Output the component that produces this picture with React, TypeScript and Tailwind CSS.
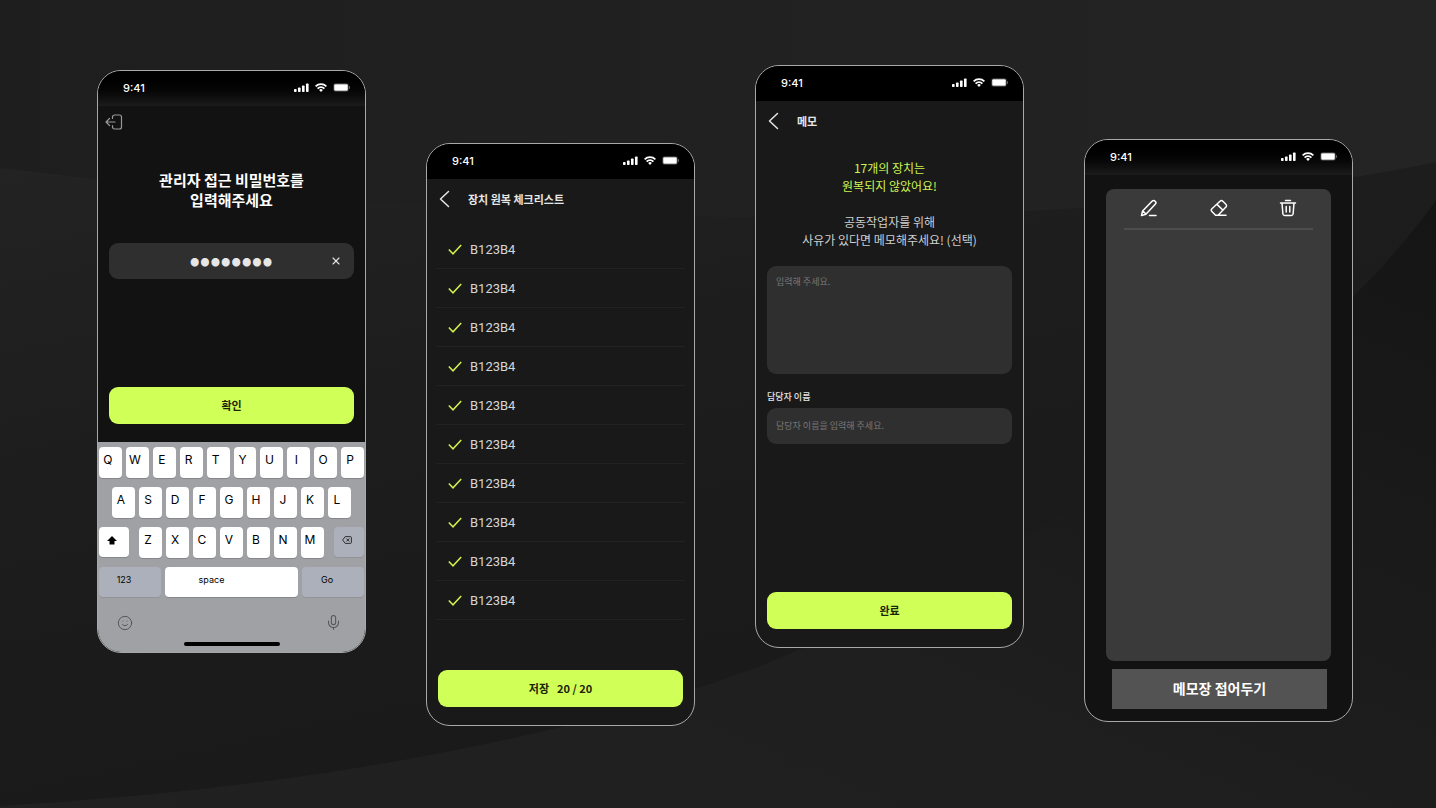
import { Mic, Smile, X } from "lucide-react";
import type { ReactNode } from "react";

const latin = "font-['Inter','Noto_Sans_CJK_KR',sans-serif]";

const StatusBar = ({ className }: { className: string }) => (
  <div className={`flex h-[35px] shrink-0 items-center justify-between pr-[14px] pb-[2px] pl-[25px] text-white ${className}`}>
    <span className={`text-[11px] leading-4 font-medium ${latin}`}>9:41</span>
    <div className="flex items-center gap-[6px]">
      <svg className="h-[9px] w-[15px]" viewBox="0 0 15 9" fill="currentColor">
        <rect x="0" y="6" width="2.6" height="3" rx=".7" />
        <rect x="4" y="4.5" width="2.6" height="4.5" rx=".7" />
        <rect x="8" y="2.5" width="2.6" height="6.5" rx=".7" />
        <rect x="12" y="0.5" width="2.6" height="8.5" rx=".7" />
      </svg>
      <svg className="h-[9px] w-[12px]" viewBox="0 0 12 9" fill="none" stroke="currentColor" strokeWidth="1.8">
        <path d="M.6 3.3a7.7 7.7 0 0 1 10.8 0M2.6 5.6a4.8 4.8 0 0 1 6.8 0" />
        <path d="M6 9 4.1 7.1a2.6 2.6 0 0 1 3.8 0Z" fill="currentColor" stroke="none" />
      </svg>
      <svg className="h-[9px] w-[18px]" viewBox="0 0 18 9">
        <rect x=".5" y=".5" width="15" height="8" rx="2" fill="none" stroke="#333" />
        <rect x="1.2" y="1.2" width="13.6" height="6.6" rx="1" fill="currentColor" />
        <path d="M16.5 3.2v2.6" stroke="#666" />
      </svg>
    </div>
  </div>
);

type PhoneProps = {
  className: string;
  barClass?: string;
  children: ReactNode;
};

const Phone = ({ className, barClass = "bg-black", children }: PhoneProps) => (
  <section
    className={`flex h-[583px] min-w-0 flex-col overflow-hidden rounded-[24px] border border-[#a8a8a8] text-[#e6e6e6] ${className}`}
  >
    <StatusBar className={barClass} />
    {children}
  </section>
);

const PrimaryButton = ({ children }: { children: ReactNode }) => (
  <button
    type="button"
    className="mx-[11px] flex h-[37px] shrink-0 items-center justify-center gap-2 rounded-[9px] bg-[#d0ff57] pb-px text-[11px] font-bold text-[#1c2408]"
  >
    {children}
  </button>
);

const ScreenHeader = ({ title }: { title: string }) => (
  <header className="flex h-10 shrink-0 items-center gap-[18px] pl-[12px]">
    <button type="button" aria-label="뒤로">
      <svg className="h-[18px] w-[11px]" viewBox="0 0 11 18" fill="none" stroke="currentColor" strokeWidth="1.5">
        <path d="M9.5 1.5 1.5 9l8 7.5" strokeLinecap="round" strokeLinejoin="round" />
      </svg>
    </button>
    <h2 className="text-[11px] leading-4 font-bold">{title}</h2>
  </header>
);

const ExitIcon = () => (
  <svg
    className="h-4 w-[18px]"
    viewBox="0 0 18 16"
    fill="none"
    stroke="currentColor"
    strokeWidth="1.2"
    strokeLinecap="round"
    strokeLinejoin="round"
  >
    <path d="M10 8H1M4.5 4.5 1 8l3.5 3.5" />
    <path d="M7.5 4.5V3a2 2 0 0 1 2-2h5a2 2 0 0 1 2 2v10a2 2 0 0 1-2 2h-5a2 2 0 0 1-2-2v-1.5" />
  </svg>
);

const ToolIcon = ({ children }: { children: ReactNode }) => (
  <svg
    className="size-[18px]"
    viewBox="0 0 18 18"
    fill="none"
    stroke="currentColor"
    strokeWidth="1.5"
    strokeLinecap="round"
    strokeLinejoin="round"
  >
    {children}
  </svg>
);

const Key = ({ label }: { label: string }) => (
  <button
    type="button"
    className="h-[31px] min-w-0 flex-1 rounded-[4px] bg-white pr-[5px] pb-[5px] text-[12px] shadow-[0_1px_0_#85878a]"
  >
    {label}
  </button>
);

const Keyboard = () => (
  <div className={`flex flex-1 flex-col bg-[#a0a1a4] pt-[5px] text-black ${latin}`}>
    <div className="flex flex-col gap-[9px] px-[1px]">
      <div className="flex gap-1">
        {"QWERTYUIOP".split("").map((k) => (
          <Key key={k} label={k} />
        ))}
      </div>
      <div className="flex gap-1 px-[13px]">
        {"ASDFGHJKL".split("").map((k) => (
          <Key key={k} label={k} />
        ))}
      </div>
      <div className="flex gap-[10px]">
        <button
          type="button"
          aria-label="shift"
          className="flex h-[30px] w-[30px] items-center justify-center rounded-[4px] bg-white pr-1 pb-1 shadow-[0_1px_0_#85878a]"
        >
          <svg className="h-[9px] w-[10px]" viewBox="0 0 10 9">
            <path d="M5 0 10 5H7.5v3.5h-5V5H0Z" />
          </svg>
        </button>
        <div className="flex min-w-0 flex-1 gap-1">
          {"ZXCVBNM".split("").map((k) => (
            <Key key={k} label={k} />
          ))}
        </div>
        <button
          type="button"
          aria-label="delete"
          className="flex h-[30px] w-[30px] items-center justify-center rounded-[4px] bg-[#abb0bb] pr-1 pb-1 shadow-[0_1px_0_#909398]"
        >
          <svg className="h-[8px] w-[10px]" viewBox="0 0 10 8" fill="none" stroke="#222" strokeWidth=".9">
            <path d="M3.2.6h5.2a1 1 0 0 1 1 1v4.8a1 1 0 0 1-1 1H3.2L.6 4ZM4.4 2.5l3 3M7.4 2.5l-3 3" />
          </svg>
        </button>
      </div>
      <div className="flex gap-1 text-[9px]">
        <button type="button" className="h-[30px] w-[62px] rounded-[4px] bg-[#abb0bb] pr-[12px] pb-[4px] shadow-[0_1px_0_#909398]">
          123
        </button>
        <button type="button" className="h-[30px] flex-1 rounded-[4px] bg-white pr-[40px] pb-[4px] shadow-[0_1px_0_#85878a]">
          space
        </button>
        <button type="button" className="h-[30px] w-[62px] rounded-[4px] bg-[#abb0bb] pr-[12px] pb-[4px] shadow-[0_1px_0_#909398]">
          Go
        </button>
      </div>
    </div>
    <div className="mt-[17px] flex items-center justify-between px-[19px] text-[#55575a]">
      <Smile size={16} strokeWidth={1.5} />
      <Mic size={17} strokeWidth={1.5} className="mr-1" />
    </div>
    <div className="mx-auto mt-auto mb-[6px] h-1 w-24 rounded-full bg-black" />
  </div>
);

const PasswordScreen = () => (
  <Phone className="mt-[70px] bg-[#121212]" barClass="bg-linear-to-b from-black to-[#1b1b1b]">
    <button type="button" aria-label="나가기" className="mt-2 ml-[7px] w-fit text-[#999]">
      <ExitIcon />
    </button>
    <h1 className="mt-10 text-center text-[15px] leading-5 font-bold text-white">
      관리자 접근 비밀번호를
      <br />
      입력해주세요
    </h1>
    <div className="mx-[11px] mt-[33px] flex h-9 items-center rounded-[9px] bg-[#2f2f2f] pr-[12px] pl-[23px]">
      <input
        type="password"
        aria-label="비밀번호"
        defaultValue="12345678"
        className="h-9 min-w-0 flex-1 bg-transparent pb-[6px] text-center text-[26px] font-black outline-none"
      />
      <button type="button" aria-label="지우기">
        <X size={12} strokeWidth={2.2} />
      </button>
    </div>
    <div className="mt-[108px] mb-[18px] flex flex-col">
      <PrimaryButton>확인</PrimaryButton>
    </div>
    <Keyboard />
  </Phone>
);

const devices = Array.from({ length: 10 }, () => "B123B4");

const ChecklistScreen = () => (
  <Phone className="mt-[143px] bg-[#191919]">
    <ScreenHeader title="장치 원복 체크리스트" />
    <ul className="mx-[9px] mt-[11px]">
      {devices.map((name, i) => (
        <li key={i} className="flex h-[39px] items-center gap-2 border-b border-[#222] pt-px pl-[12px]">
          <svg className="h-[11px] w-[14px]" viewBox="0 0 14 11" fill="none" stroke="#d0f04f" strokeWidth="1.5">
            <path d="m.8 5.5 4.2 4.3L13.2 1" />
          </svg>
          <span className="font-['Roboto',sans-serif] text-[13px] leading-4 text-[#d6d6d6]">{name}</span>
        </li>
      ))}
    </ul>
    <div className="mt-auto mb-[18px] flex flex-col">
      <PrimaryButton>
        <span>저장</span>
        <span>20 / 20</span>
      </PrimaryButton>
    </div>
  </Phone>
);

const MemoScreen = () => (
  <Phone className="mt-[65px] bg-[#191919]">
    <ScreenHeader title="메모" />
    <p className="mt-[18px] text-center text-[12px] leading-[18px] text-[#cdf452]">
      17개의 장치는
      <br />
      원복되지 않았어요!
    </p>
    <p className="mt-[18px] text-center text-[12px] leading-[18px] text-[#cfcfcf]">
      공동작업자를 위해
      <br />
      사유가 있다면 메모해주세요! (선택)
    </p>
    <textarea
      aria-label="메모"
      placeholder="입력해 주세요."
      className="mx-[11px] mt-[17px] h-[108px] shrink-0 resize-none rounded-[9px] bg-[#2f2f2f] px-[9px] py-2 text-[9px] leading-4 outline-none placeholder:text-[#777]"
    />
    <label htmlFor="manager" className="mx-[11px] mt-[15px] text-[9px] leading-4 font-medium">
      담당자 이름
    </label>
    <input
      id="manager"
      placeholder="담당자 이름을 입력해 주세요."
      className="mx-[11px] mt-[3px] h-9 shrink-0 rounded-[9px] bg-[#2f2f2f] px-[9px] pb-[2px] text-[9px] outline-none placeholder:text-[#777]"
    />
    <div className="mt-auto mb-[18px] flex flex-col">
      <PrimaryButton>완료</PrimaryButton>
    </div>
  </Phone>
);

const NotepadScreen = () => (
  <Phone className="mt-[139px] bg-[#121212]" barClass="bg-linear-to-b from-black to-[#1b1b1b]">
    <div className="mx-[21px] mt-[14px] h-[472px] rounded-[8px] bg-[#3a3a3a] px-[18px] pt-[10px]">
      <div className="flex justify-between border-b-2 border-[#4d4d4d] px-4 pb-[11px] text-white">
        <button type="button" aria-label="펜">
          <ToolIcon>
            <path d="M1.5 16.5 2.6 11.9 12 2.2a2.2 2.2 0 0 1 3.2 0 2.2 2.2 0 0 1 0 3.1L5.9 15.2ZM2.9 11.9l3 3.1M9.5 16.5h6.5" />
          </ToolIcon>
        </button>
        <button type="button" aria-label="지우개">
          <ToolIcon>
            <path d="M10 2.2a2 2 0 0 1 2.9 0l3 3a2 2 0 0 1 0 2.9l-7.8 8.2H5.6l-3.7-3.8a2 2 0 0 1 0-2.8ZM7 5.4l6 5.9M8 16.3h8" />
          </ToolIcon>
        </button>
        <button type="button" aria-label="삭제">
          <ToolIcon>
            <path d="M1.5 4h15M6.5 1.5h5M3 4l.9 11a1.8 1.8 0 0 0 1.8 1.5h6.6a1.8 1.8 0 0 0 1.8-1.5L15 4M7.2 7.5v5.5M10.8 7.5v5.5" />
          </ToolIcon>
        </button>
      </div>
    </div>
    <button type="button" className="mt-2 mr-[25px] ml-[27px] h-10 bg-[#535353] pb-[2px] text-[14px] font-bold text-white">
      메모장 접어두기
    </button>
  </Phone>
);

export default function App() {
  return (
    <main className="relative min-h-screen overflow-hidden bg-[#1e1e1e] font-['Noto_Sans_CJK_KR',sans-serif]">
      <svg className="absolute inset-0 h-full w-full" viewBox="0 0 1436 808" preserveAspectRatio="none">
        <defs>
          <linearGradient id="top" x1="0" y1="0" x2="1" y2="0">
            <stop offset="0" stopColor="#1e1e1e" />
            <stop offset="1" stopColor="#242424" />
          </linearGradient>
          <linearGradient id="band" x1="0" y1="0" x2=".5" y2="1">
            <stop offset="0" stopColor="#232323" />
            <stop offset=".4" stopColor="#1d1d1d" />
            <stop offset="1" stopColor="#191919" />
          </linearGradient>
          <linearGradient id="low" x1="0" y1="1" x2="1" y2="0">
            <stop offset="0" stopColor="#212121" />
            <stop offset=".4" stopColor="#1f1f1f" />
            <stop offset="1" stopColor="#151515" />
          </linearGradient>
        </defs>
        <path d="M0 0h1436v808H0Z" fill="url(#top)" />
        <path d="M0 168C420 218 1010 250 1436 162V808H0Z" fill="url(#band)" />
        <path d="M0 806C420 782 690 700 810 645 1110 510 1330 350 1436 200V808H0Z" fill="url(#low)" />
      </svg>
      <div className="relative grid grid-cols-4 items-start gap-[60px] pr-[83px] pl-[97px]">
        <PasswordScreen />
        <ChecklistScreen />
        <MemoScreen />
        <NotepadScreen />
      </div>
    </main>
  );
}
